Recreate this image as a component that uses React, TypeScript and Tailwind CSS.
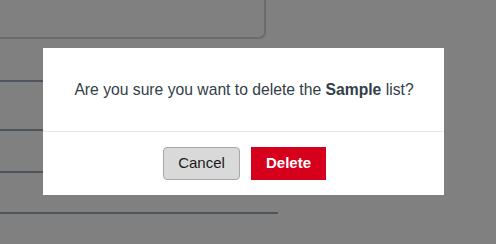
import React from 'react';

const App: React.FC = () => {
  return (
    <div
      className="relative w-[496px] h-[244px] overflow-hidden bg-[#808080]"
      style={{ fontFamily: '"Liberation Sans", Arial, sans-serif' }}
    >
      {/* Page behind the overlay */}
      <div className="w-[278px]">
        <div className="-ml-2 -mt-2 w-[274px] h-[47px] rounded-br-[7px] border-r-2 border-b-2 border-[#6b6b6b]" />
        <div className="mt-[41px] h-[2px] bg-[#4d545b]" />
        <div className="mt-[47px] h-[2px] bg-[#4d545b]" />
        <div className="mt-[40px] h-[2px] bg-[#4d545b]" />
        <div className="mt-[39px] h-[2px] bg-[#4d545b]" />
      </div>

      {/* Modal */}
      <div className="absolute left-[43px] top-[48px] w-[401px] bg-white">
        <div className="h-[83px] flex items-center justify-center text-[15.7px] text-[#323e48] pl-[1px] pt-[1px]">
          <p>
            Are you sure you want to delete the <span className="font-bold">Sample</span> list?
          </p>
        </div>
        <div className="h-px bg-[#e6e6e6]" />
        <div className="h-[63px] flex items-center justify-center gap-[11px] pl-[2px]">
          <button className="w-[77px] h-[33px] rounded-[4px] bg-[#d9d9d9] border border-[#a8a8a8] text-[15px] text-[#1a1a1a]">
            Cancel
          </button>
          <button className="w-[75px] h-[33px] bg-[#d6001c] text-[15px] font-bold text-white">
            Delete
          </button>
        </div>
      </div>
    </div>
  );
};

export default App;
